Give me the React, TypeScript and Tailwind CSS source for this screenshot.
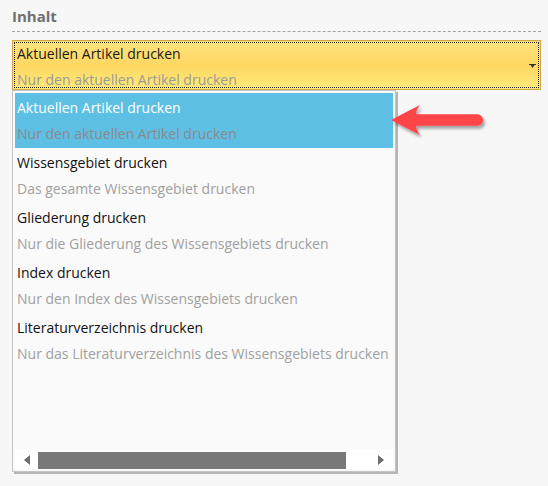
import React from 'react';

type Option = { title: string; desc: string };

const options: Option[] = [
  { title: 'Aktuellen Artikel drucken', desc: 'Nur den aktuellen Artikel drucken' },
  { title: 'Wissensgebiet drucken', desc: 'Das gesamte Wissensgebiet drucken' },
  { title: 'Gliederung drucken', desc: 'Nur die Gliederung des Wissensgebiets drucken' },
  { title: 'Index drucken', desc: 'Nur den Index des Wissensgebiets drucken' },
  { title: 'Literaturverzeichnis drucken', desc: 'Nur das Literaturverzeichnis des Wissensgebiets drucken' },
];

function PointerArrow() {
  return (
    <svg className="absolute left-[386px] top-[98px]" width="106" height="46" viewBox="0 0 106 46">
      <defs>
        <filter id="sh" x="-20%" y="-40%" width="140%" height="180%">
          <feDropShadow dx="2" dy="3" stdDeviation="1.6" floodColor="#000" floodOpacity="0.35" />
        </filter>
      </defs>
      <path
        d="M5 22 Q20 14 34 7 Q30 12 30 16.3 L91.3 16.3 A5.7 5.7 0 0 1 91.3 27.7 L30 27.7 Q30 32 34 37 Q20 30 5 22Z"
        fill="#ff4447"
        filter="url(#sh)"
      />
    </svg>
  );
}

export default function App() {
  return (
    <div
      className="relative w-[548px] h-[486px] bg-[#f7f7f7] pl-[12px] pr-[7px] pt-[6px] text-[14px]"
      style={{ fontFamily: '"Open Sans", "Noto Sans", sans-serif' }}
    >
      <div className="font-bold text-[15px] text-[#707070] leading-[20px] pb-[5px] border-b border-dashed border-[#a3a3a3]">
        Inhalt
      </div>

      {/* combo box */}
      <div className="mt-[8px] h-[50px] border border-[#cfa644] bg-gradient-to-b from-[#ffe47f] via-[#fed762] to-[#ffea7a] p-[1px]">
        <div className="relative h-full border border-dotted border-[#222]">
          <div className="-mt-[2px] pl-[2px] leading-[26px]">
            <div className="text-[#1a1a1a]">Aktuellen Artikel drucken</div>
            <div className="text-[#9a9a9a]">Nur den aktuellen Artikel drucken</div>
          </div>
          <svg className="absolute right-[2px] top-[21px]" width="7" height="4" viewBox="0 0 7 4">
            <path d="M0 0H7V1H5.5L3.5 4L1.5 1H0Z" fill="#333" />
          </svg>
        </div>
      </div>

      {/* dropdown list */}
      <div className="w-[384px] h-[382px] border border-[#c4c4c4] bg-[#fafafa] shadow-[2px_2px_0_#b5b5b5] p-[2px] flex flex-col">
        <div className="flex-1">
          {options.map((o, i) => (
            <div
              key={o.title}
              className={`h-[55px] pt-[2px] pl-[2px] leading-[26px] ${i === 0 ? 'bg-[#5ebfe5] h-[54px]' : ''}`}
            >
              <div className={i === 0 ? 'text-white' : 'text-[#111]'}>{o.title}</div>
              <div className={i === 0 ? 'text-[#8a8a8a]' : 'text-[#a0a0a0]'}>{o.desc}</div>
            </div>
          ))}
        </div>
        <div className="h-[19px] bg-white flex items-center">
          <div className="ml-[9px] w-0 h-0 border-t-[5px] border-b-[5px] border-r-[6px] border-t-transparent border-b-transparent border-r-[#6e6e6e]" />
          <div className="ml-[8px] self-end w-[308px] h-[17px] bg-[#787878]" />
          <div className="ml-auto mr-[9px] w-0 h-0 border-t-[5px] border-b-[5px] border-l-[6px] border-t-transparent border-b-transparent border-l-[#6e6e6e]" />
        </div>
      </div>

      <PointerArrow />
    </div>
  );
}
